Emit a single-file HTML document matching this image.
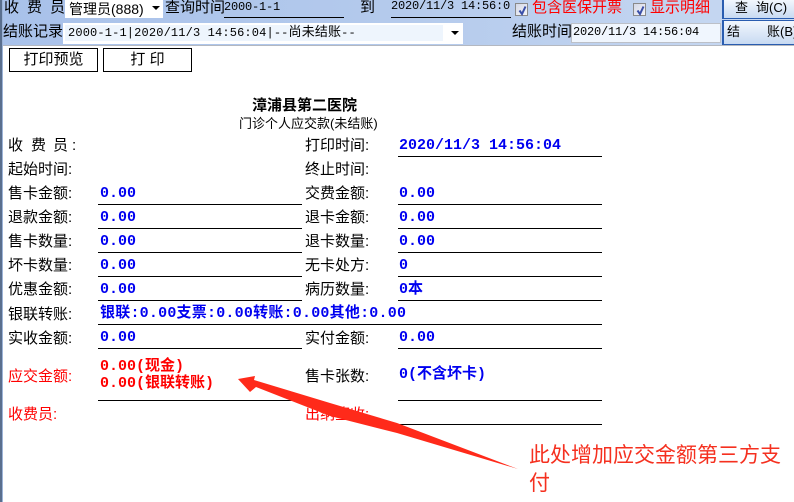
<!DOCTYPE html>
<html lang="zh">
<head>
<meta charset="utf-8">
<title>结账</title>
<style>
html,body{margin:0;padding:0;background:#fff}
#p{position:relative;width:794px;height:502px;overflow:hidden;background:#fff;font-family:"Liberation Sans","WenQuanYi Zen Hei","Noto Sans CJK SC",sans-serif;color:#000}
#p div{position:absolute;white-space:nowrap}
.l{font-size:15px;line-height:18px;height:18px}
.r{color:#f00}
.v{font-family:"Liberation Mono","WenQuanYi Zen Hei","Noto Sans CJK SC",monospace;font-weight:bold;font-size:15px;line-height:18px;height:18px;color:#0000f0}
.vr{color:#f00}
.h{background:#000;height:1px}
.a{left:98px;width:204px}
.b{left:398px;width:204px}
.m{font-family:"Liberation Mono",monospace;font-size:12px;line-height:14px;height:14px}
.btn{box-sizing:border-box;border:1px solid #000;background:#fff;height:24px;width:89px;top:48px;text-align:center;font-size:15px;line-height:21px}
.cb{box-sizing:border-box;width:13px;height:13px;border:1px solid #8a8a8a;background:linear-gradient(135deg,#d4d8e6,#f4f5f9);top:3px}
.cb svg{position:absolute;left:1px;top:1px}
.qb{box-sizing:border-box;left:722px;width:80px;border:1px solid #2a5db0;border-width:1px 0 1px 2px;background:linear-gradient(#f2f7fd,#c8daf2);font-size:13px}
</style>
</head>
<body>
<div id="p">
  <!-- header -->
  <div style="left:0;top:0;width:794px;height:45px;background:linear-gradient(90deg,#a8c1ea 0,#b4caec 50%,#c8d9f2 100%)"></div>
  <div style="left:0;top:45px;width:794px;height:1px;background:#b4b8c0"></div>
  <div style="left:0;top:0;width:2px;height:502px;background:#5a6f8e"></div>
  <div style="left:2px;top:0;width:1px;height:502px;background:#9db4d8"></div>

  <div class="l" style="left:4px;top:-1px">收</div>
  <div class="l" style="left:27px;top:-1px">费</div>
  <div class="l" style="left:50px;top:-1px">员</div>
  <div style="left:65px;top:0;width:98px;height:18px;background:#fff"></div>
  <div class="l" style="left:69px;top:0;font-size:14px">管理员(888)</div>
  <div style="left:152px;top:6px;width:0;height:0;border:4px solid transparent;border-top:4px solid #000;border-bottom:0"></div>
  <div class="l" style="left:165px;top:-1px">查询时间</div>
  <div class="m" style="left:224px;top:0;letter-spacing:-.2px">2000-1-1</div>
  <div class="h" style="left:224px;top:17px;width:120px"></div>
  <div class="l" style="left:360px;top:-1px">到</div>
  <div class="m" style="left:391px;top:-1px;letter-spacing:-.2px">2020/11/3 14:56:0</div>
  <div class="h" style="left:391px;top:17px;width:120px"></div>

  <div class="cb" style="left:515px"><svg width="11" height="11" viewBox="0 0 11 11"><path d="M2.5 5.5L5 9L8.5 1.5" fill="none" stroke="#3a4fa8" stroke-width="2"/></svg></div>
  <div class="l r" style="left:532px;top:-1px">包含医保开票</div>
  <div class="cb" style="left:633px"><svg width="11" height="11" viewBox="0 0 11 11"><path d="M2.5 5.5L5 9L8.5 1.5" fill="none" stroke="#3a4fa8" stroke-width="2"/></svg></div>
  <div class="l r" style="left:650px;top:-1px">显示明细</div>

  <div class="qb" style="top:-1px;height:20px"></div>
  <div class="qb" style="top:20px;height:25px"></div>
  <div class="l" style="left:735px;top:-1px;font-size:13px">查</div>
  <div class="l" style="left:756px;top:-1px;font-size:13px">询(C)</div>
  <div class="l" style="left:727px;top:23px;font-size:13px">结</div>
  <div class="l" style="left:767px;top:23px;font-size:13px">账(B)</div>

  <div class="l" style="left:3px;top:23px">结账记录</div>
  <div style="left:63px;top:23px;width:400px;height:21px;background:#fff"></div>
  <div style="left:65px;top:25px;width:378px;height:16px;background:#eef5fd"></div>
  <div class="m" style="left:68px;top:26px;font-size:12px;font-family:'Liberation Mono','WenQuanYi Zen Hei','Noto Sans CJK SC',monospace;letter-spacing:.15px">2000-1-1|2020/11/3 14:56:04|--<span style="font-size:13px">尚未结账</span>--</div>
  <div style="left:451px;top:31px;width:0;height:0;border:4px solid transparent;border-top:4px solid #000;border-bottom:0"></div>
  <div class="l" style="left:512px;top:23px">结账时间</div>
  <div style="box-sizing:border-box;left:571px;top:23px;width:150px;height:20px;background:#f0f6fe;border:1px solid #bcc0c8"></div>
  <div class="m" style="left:573px;top:25px;letter-spacing:-.2px">2020/11/3 14:56:04</div>

  <!-- toolbar -->
  <div class="btn" style="left:9px">打印预览</div>
  <div class="btn" style="left:103px">打&nbsp;印</div>

  <!-- titles -->
  <div style="left:252px;top:97px;font-size:15px;line-height:18px;font-weight:bold">漳浦县第二医院</div>
  <div style="left:239px;top:116px;font-size:13px;line-height:16px">门诊个人应交款(未结账)</div>

  <!-- left labels -->
  <div class="l" style="left:8px;top:137px">收</div><div class="l" style="left:31px;top:137px">费</div><div class="l" style="left:53px;top:137px">员</div><div class="l" style="left:72px;top:137px">:</div>
  <div class="l" style="left:8px;top:161px">起始时间:</div>
  <div class="l" style="left:8px;top:185px">售卡金额:</div>
  <div class="l" style="left:8px;top:209px">退款金额:</div>
  <div class="l" style="left:8px;top:233px">售卡数量:</div>
  <div class="l" style="left:8px;top:257px">坏卡数量:</div>
  <div class="l" style="left:8px;top:281px">优惠金额:</div>
  <div class="l" style="left:8px;top:306px">银联转账:</div>
  <div class="l" style="left:8px;top:330px">实收金额:</div>
  <div class="l r" style="left:8px;top:368px">应交金额:</div>
  <div class="l r" style="left:8px;top:406px">收费员:</div>

  <!-- left values -->
  <div class="v" style="left:100px;top:185px">0.00</div>
  <div class="v" style="left:100px;top:209px">0.00</div>
  <div class="v" style="left:100px;top:233px">0.00</div>
  <div class="v" style="left:100px;top:257px">0.00</div>
  <div class="v" style="left:100px;top:281px">0.00</div>
  <div class="v" style="left:100px;top:305px;letter-spacing:.22px">银联:0.00支票:0.00转账:0.00其他:0.00</div>
  <div class="v" style="left:100px;top:329px">0.00</div>
  <div class="v vr" style="left:100px;top:358px">0.00(现金)</div>
  <div class="v vr" style="left:100px;top:375px">0.00(银联转账)</div>

  <!-- right labels -->
  <div class="l" style="left:305px;top:137px">打印时间:</div>
  <div class="l" style="left:305px;top:161px">终止时间:</div>
  <div class="l" style="left:305px;top:185px">交费金额:</div>
  <div class="l" style="left:305px;top:209px">退卡金额:</div>
  <div class="l" style="left:305px;top:233px">退卡数量:</div>
  <div class="l" style="left:305px;top:257px">无卡处方:</div>
  <div class="l" style="left:305px;top:281px">病历数量:</div>
  <div class="l" style="left:305px;top:330px">实付金额:</div>
  <div class="l" style="left:305px;top:368px">售卡张数:</div>
  <div class="l r" style="left:305px;top:406px">出纳签收:</div>

  <!-- right values -->
  <div class="v" style="left:399px;top:137px">2020/11/3 14:56:04</div>
  <div class="v" style="left:399px;top:185px">0.00</div>
  <div class="v" style="left:399px;top:209px">0.00</div>
  <div class="v" style="left:399px;top:233px">0.00</div>
  <div class="v" style="left:399px;top:257px">0</div>
  <div class="v" style="left:399px;top:281px">0本</div>
  <div class="v" style="left:399px;top:329px">0.00</div>
  <div class="v" style="left:399px;top:366px">0(不含坏卡)</div>

  <!-- rules -->
  <div class="h b" style="top:156px"></div>
  <div class="h a" style="top:204px"></div><div class="h b" style="top:204px"></div>
  <div class="h a" style="top:228px"></div><div class="h b" style="top:228px"></div>
  <div class="h a" style="top:252px"></div><div class="h b" style="top:252px"></div>
  <div class="h a" style="top:276px"></div><div class="h b" style="top:276px"></div>
  <div class="h a" style="top:300px"></div><div class="h b" style="top:300px"></div>
  <div class="h" style="left:98px;top:324px;width:504px"></div>
  <div class="h a" style="top:348px"></div><div class="h b" style="top:348px"></div>
  <div class="h a" style="top:400px"></div><div class="h b" style="top:400px"></div>
  <div class="h b" style="top:424px"></div>

  <!-- annotation arrow -->
  <svg style="position:absolute;left:0;top:0" width="794" height="502" viewBox="0 0 794 502">
    <path d="M238 379L255 376L254 380L330 403L397 423L518 469L397 433L330 416L256 387L250 392Z" fill="#ff2a1a"/>
  </svg>
  <div style="left:529px;top:442px;font-size:21px;line-height:28px;color:#f5301f">此处增加应交金额第三方支</div>
  <div style="left:529px;top:470px;font-size:21px;line-height:28px;color:#f5301f">付</div>
</div>
</body>
</html>
